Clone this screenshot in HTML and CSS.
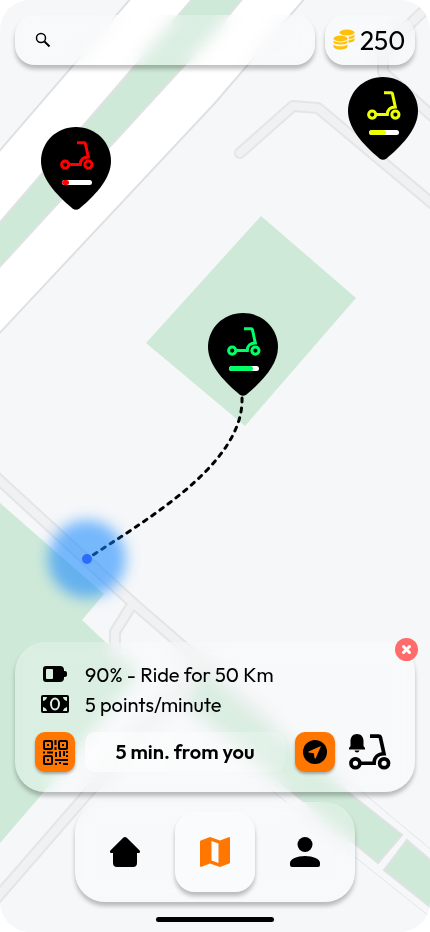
FILE: index.html
```
<!DOCTYPE html>
<html lang="en">
<head>
  <meta charset="UTF-8">
  <meta name="viewport" content="width=device-width, initial-scale=1.0">
  <title>Scooter map</title>
  <link rel="stylesheet" href="styles.css">
</head>
<body>

  <!-- shared icons -->
  <svg class="sprite" aria-hidden="true">
    <symbol id="scooter" viewBox="0 0 34 29">
      <g fill="none" stroke="currentColor" stroke-width="3">
        <circle cx="5.2" cy="23.6" r="3.6"/>
        <circle cx="28.4" cy="23.6" r="3.6"/>
        <path d="M9 23.6H20.3C20.3 18.8 23.5 15.9 28.3 15.9L25.4 2.6Q25.2 1.7 24.2 1.7H17"/>
      </g>
    </symbol>
    <symbol id="pin" viewBox="0 0 70 83">
      <path d="M35 0C55 0 70 15.500 70 34C70 50 57 66 38.500 81.500Q35 84 31.500 81.500C13 66 0 50 0 34C0 15.500 15 0 35 0Z"/>
    </symbol>
  </svg>

  <main class="phone">

    <div class="map">
      <svg class="map-art" viewBox="0 0 430 932" preserveAspectRatio="xMidYMid slice" aria-hidden="true">
        <!-- avenue -->
        <path class="avenue" d="M-5 156L132 -3H306L215 103L-5 338Z"/>
        <path class="green edged" d="M-5 228L194 -3H244L215 32L-5 272Z"/>

        <!-- parks -->
        <path class="green" d="M261 216L356 298L245 426L146 343Z"/>
        <path class="green" d="M0 503L104 594L82 620L138 673L43 793L0 843Z"/>

        <!-- roads -->
        <g class="road-edge">
          <path d="M240 153L293 106L318 108L440 210"/>
          <path d="M436 -1L383 50V72L440 123"/>
          <path d="M-5 476L133 603L200 661L270 722"/>
          <path d="M133 603L115 632V655"/>
          <path d="M200 665L88 793L-5 900"/>
        </g>
        <g class="road">
          <path d="M240 153L293 106L318 108L440 210"/>
          <path d="M436 -1L383 50V72L440 123"/>
          <path d="M-5 476L133 603L200 661L270 722"/>
          <path d="M133 603L115 632V655"/>
          <path d="M200 665L88 793L-5 900"/>
        </g>

        <path class="line" d="M190 720L275 793L435 921M235 690L362 792L435 853"/>
        <path class="green edged" d="M205 672L348 792L402 835L378 863L292 792L184 703Z"/>
        <path class="green edged" d="M407 840L435 864V911L384 870Z"/>

        <!-- route -->
        <path class="route" d="M242 398C244 465 142 522 87 559"/>
        <circle class="halo" cx="87" cy="559" r="39"/>
        <circle class="me" cx="87" cy="559" r="5"/>
      </svg>

      <button class="pin pin-low" aria-label="Scooter, low battery">
        <svg class="pin-shape"><use href="#pin"/></svg>
        <svg class="pin-scooter"><use href="#scooter"/></svg>
        <span class="level"><span style="width: 24%"></span></span>
      </button>
      <button class="pin pin-mid" aria-label="Scooter, medium battery">
        <svg class="pin-shape"><use href="#pin"/></svg>
        <svg class="pin-scooter"><use href="#scooter"/></svg>
        <span class="level"><span style="width: 57%"></span></span>
      </button>
      <button class="pin pin-high" aria-label="Scooter, high battery">
        <svg class="pin-shape"><use href="#pin"/></svg>
        <svg class="pin-scooter"><use href="#scooter"/></svg>
        <span class="level"><span style="width: 81%"></span></span>
      </button>
    </div>

    <header class="topbar">
      <label class="search glass">
        <svg width="16" height="16" viewBox="0 0 16 16" fill="none" stroke="#000">
          <circle cx="6" cy="6" r="4.500" stroke-width="1.500"/>
          <path d="M9.500 9.500L14.500 14.500" stroke-width="2"/>
        </svg>
        <input type="search" aria-label="Search">
      </label>
      <div class="points glass">
        <svg width="22" height="22" viewBox="0 0 22 22" fill="#ffc107">
          <ellipse cx="14" cy="3.500" rx="7.500" ry="3"/>
          <path d="M15.500 7.600C18 7.400 20.500 6.500 21.500 5.400V7.500C21.500 8.700 19 9.800 15.800 10.200C16 9.300 16 8.500 15.500 7.600Z"/>
          <path d="M15.500 11.300C18 11 20.500 10.200 21.500 9.100V11C21.500 12.300 19 13.400 15.500 13.800Z"/>
          <ellipse cx="7.500" cy="9.500" rx="7" ry="3"/>
          <path d="M.5 11.600C3.500 14.100 11.500 14.100 14.500 11.600V13.200C14.500 16.200 .5 16.200 .5 13.200Z"/>
          <path d="M.5 15.400C3.500 17.900 11.500 17.900 14.500 15.400V17.600C14.500 21.600 .5 21.600 .5 17.600Z"/>
        </svg>
        <span>250</span>
      </div>
    </header>

    <section class="ride glass">
      <button class="close" aria-label="Close">
        <svg width="11" height="11" viewBox="0 0 11 11" stroke="#fff" stroke-width="3" stroke-linecap="round">
          <path d="M2.500 2.500L8.500 8.500M8.500 2.500L2.500 8.500"/>
        </svg>
      </button>

      <ul class="info">
        <li>
          <svg width="26" height="16" viewBox="0 0 26 16">
            <path fill-rule="evenodd" d="M4 0H18Q22 0 22 4V5H23Q25 5 25 7V9Q25 11 23 11H22V12Q22 16 18 16H4Q1 16 1 13V3Q1 0 4 0ZM5 3Q4 3 4 4V12Q4 13 5 13H10Q11 13 11 12V4Q11 3 10 3Z"/>
          </svg>
          <span>90% - Ride for 50 Km</span>
        </li>
        <li>
          <svg width="28" height="18" viewBox="0 0 28 18">
            <rect width="28" height="18" rx="2"/>
            <ellipse cx="14" cy="9" rx="4" ry="5.500" fill="none" stroke="#d9efdf" stroke-width="2"/>
            <path fill="#d9efdf" d="M2 2H6Q5.500 5 2 6ZM26 2H22Q22.500 5 26 6ZM2 16H6Q5.500 13 2 12ZM26 16H22Q22.500 13 26 12Z"/>
          </svg>
          <span>5 points/minute</span>
        </li>
      </ul>

      <div class="actions">
        <button class="square" aria-label="Scan QR code">
          <svg width="25" height="25" viewBox="0 0 25 25">
            <g fill="none" stroke="#000" stroke-width="2">
              <rect x="1" y="1" width="8" height="8" rx="1"/>
              <rect x="16" y="1" width="8" height="8" rx="1"/>
              <rect x="1" y="16" width="8" height="8" rx="1"/>
            </g>
            <path d="M4 4h2v2h-2zM19 4h2v2h-2zM4 19h2v2h-2zM11.500 0h2v5h-2zM11.500 7h2v3h-2zM0 11.500h2v2h-2zM4 11.500h6v2h-6zM12 12h2v5h-2zM16 11h2v6h-2zM20 11h2v5h-2zM23 11h2v2h-2zM23 15h2v2h-2zM12 19h13v2h-13zM12 23h2v2h-2zM16 22h2v2h-2zM20 23h5v2h-5z"/>
          </svg>
        </button>
        <p class="distance">5 min. from you</p>
        <button class="square" aria-label="Navigate">
          <svg width="24" height="24" viewBox="0 0 24 24">
            <circle cx="12" cy="12" r="12"/>
            <path fill="#ff7600" d="M18 6L5.500 11.400V12.400L10.800 13.200L11.600 18.500H12.600Z"/>
          </svg>
        </button>
        <button class="ring" aria-label="Ring scooter">
          <svg class="ring-scooter"><use href="#scooter"/></svg>
          <svg class="ring-bell" viewBox="0 0 16 19">
            <path d="M8 0C12 0 14.500 2.800 14.500 7V12L16 14V15.500H0V14L1.500 12V7C1.500 2.800 4 0 8 0ZM5.500 16.500H10.500Q10 18.500 8 18.500Q6 18.500 5.500 16.500Z"/>
          </svg>
        </button>
      </div>
    </section>

    <nav class="tabs glass">
      <a href="#home" aria-label="Home">
        <svg width="30" height="30" viewBox="0 0 30 30">
          <path d="M15 0Q16 0 16.800 .8L29.600 13.600Q30 14 30 15Q30 16 29 16H27V26Q27 30 23 30H7Q3 30 3 26V16H1Q0 16 0 15Q0 14 .4 13.600L13.200 .8Q14 0 15 0Z"/>
        </svg>
      </a>
      <a class="active" href="#map" aria-label="Map">
        <svg width="30" height="30" viewBox="0 0 30 30">
          <path fill="#ff7600" fill-rule="evenodd" d="M10 0L20 3.500L28.500 .2Q30 -.2 30 1.200V25.500Q30 26.300 29.200 26.600L20 30L10 26.500L1.500 29.800Q0 30.200 0 28.800V4.500Q0 3.700 .8 3.400ZM11.500 4V23.500L18.500 26V6.500Z"/>
        </svg>
      </a>
      <a href="#profile" aria-label="Profile">
        <svg width="30" height="30" viewBox="0 0 30 30">
          <circle cx="15" cy="7.500" r="7.500"/>
          <path d="M15 19C23 19 30 22 30 26V28Q30 30 28 30H2Q0 30 0 28V26C0 22 7 19 15 19Z"/>
        </svg>
      </a>
    </nav>

    <div class="home-indicator"></div>
  </main>

</body>
</html>
```
FILE: styles.css
```
* {
  box-sizing: border-box;
}
body {
  margin: 0;
  background: #fff;
  font-family: Outfit, Lato, sans-serif;
  color: #000;
}
button {
  padding: 0;
  border: 0;
  background: none;
  color: inherit;
  font: inherit;
  cursor: pointer;
}
svg {
  display: block;
}
.sprite {
  position: absolute;
  width: 0;
  height: 0;
}

.phone {
  position: relative;
  display: flex;
  flex-direction: column;
  min-height: 100vh;
  padding: 15px 15px 10px;
}
.glass {
  background: rgba(255, 255, 255, 0.25);
  backdrop-filter: blur(8px);
  box-shadow: 0 4px 4px rgba(0, 0, 0, 0.25);
}

/* map */
.map {
  position: absolute;
  inset: 0;
  overflow: hidden;
  border-radius: 30px;
  background: #f5f7f9;
}
.map-art {
  width: 100%;
  height: 100%;
}
.avenue {
  fill: #fff;
  stroke: #dfe0e3;
  stroke-width: 2;
}
.green {
  fill: #cee9d8;
}
.edged {
  stroke: #dfe2e2;
  stroke-width: 2;
}
.road-edge,
.road {
  fill: none;
  stroke-linecap: round;
  stroke-linejoin: round;
}
.road-edge {
  stroke: #e4e5e5;
  stroke-width: 12;
}
.road {
  stroke: #f0f1f2;
  stroke-width: 8;
}
.line {
  fill: none;
  stroke: #e4e5e6;
  stroke-width: 1;
}
.route {
  fill: none;
  stroke: #000;
  stroke-width: 3;
  stroke-linecap: round;
  stroke-dasharray: 4 6;
}
.halo {
  fill: rgba(18, 134, 255, 0.56);
  filter: blur(7px);
}
.me {
  fill: #2b6bff;
}

/* scooter pins */
.pin {
  position: absolute;
  width: 70px;
  height: 83px;
}
.pin-low {
  left: 41px;
  top: 127px;
  color: #f00;
}
.pin-mid {
  left: 348px;
  top: 77px;
  color: #ebff00;
}
.pin-high {
  left: 208px;
  top: 313px;
  color: #00ff66;
}
.pin-shape {
  position: absolute;
  inset: 0;
  width: 70px;
  height: 83px;
  fill: #000;
}
.pin-scooter {
  position: absolute;
  left: 19px;
  top: 14px;
  width: 34px;
  height: 29px;
}
.level {
  position: absolute;
  left: 21px;
  top: 53px;
  width: 30px;
  height: 5px;
  border-radius: 3px;
  overflow: hidden;
  background: #fff;
}
.level span {
  display: block;
  height: 100%;
  border-radius: 3px;
  background: currentColor;
}

/* top bar */
.topbar {
  display: flex;
  gap: 10px;
  margin-bottom: auto;
}
.search,
.points {
  display: flex;
  align-items: center;
  height: 50px;
  border-radius: 20px;
}
.search {
  flex: 1;
  gap: 10px;
  min-width: 0;
  padding: 0 20px;
}
.search input {
  flex: 1;
  min-width: 0;
  border: 0;
  outline: 0;
  background: none;
  font: inherit;
  font-size: 20px;
}
.points {
  flex: none;
  gap: 5px;
  width: 90px;
  padding-left: 8px;
  font-size: 26px;
}

/* ride card */
.ride {
  position: relative;
  padding: 17px 20px 20px;
  border-radius: 30px;
  font-size: 20px;
}
.close {
  position: absolute;
  top: -4px;
  right: -3px;
  display: grid;
  place-items: center;
  width: 23px;
  height: 23px;
  border-radius: 50%;
  background: #ff6b6b;
}
.info {
  margin: 0 0 13px;
  padding: 0;
  list-style: none;
}
.info li {
  display: grid;
  grid-template-columns: 40px 1fr;
  column-gap: 10px;
  align-items: center;
  height: 30px;
}
.info svg {
  justify-self: center;
}
.actions {
  display: flex;
  gap: 10px;
}
.square {
  display: grid;
  place-items: center;
  width: 40px;
  height: 40px;
  border-radius: 10px;
  background: #ff7600;
  box-shadow: 0 2px 3px rgba(0, 0, 0, 0.3);
}
.distance {
  flex: 1;
  margin: 0;
  border-radius: 10px;
  background: linear-gradient(100deg, rgba(255, 255, 255, 0.6), rgba(255, 255, 255, 0.15));
  font-weight: 600;
  line-height: 40px;
  text-align: center;
}
.ring {
  position: relative;
  width: 50px;
  height: 40px;
}
.ring-scooter {
  width: 42px;
  height: 36px;
  margin: 0 auto;
}
.ring-bell {
  position: absolute;
  left: 4px;
  top: 2px;
  width: 16px;
  height: 19px;
}

/* bottom tabs */
.tabs {
  display: flex;
  align-self: center;
  justify-content: space-between;
  width: 280px;
  margin: 10px 0 15px;
  padding: 10px;
  border-radius: 30px;
}
.tabs a {
  display: grid;
  place-items: center;
  width: 80px;
  height: 80px;
  border-radius: 20px;
}
.tabs .active {
  background: rgba(255, 255, 255, 0.3);
  box-shadow: 0 4px 4px rgba(0, 0, 0, 0.25);
}
.home-indicator {
  position: relative;
  align-self: center;
  width: 118px;
  height: 5px;
  border-radius: 3px;
  background: #000;
}
```
